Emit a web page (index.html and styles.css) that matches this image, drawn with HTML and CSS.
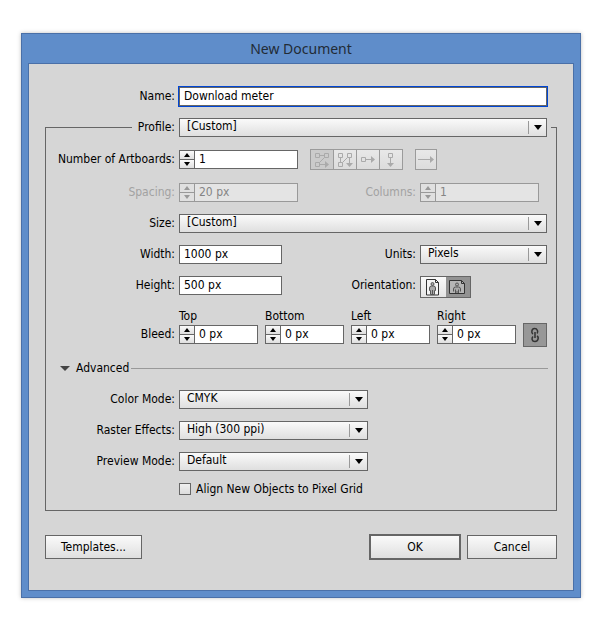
FILE: index.html
```html
<!DOCTYPE html>
<html lang="en">
<head>
    <meta charset="UTF-8">
    <meta name="viewport" content="width=device-width, initial-scale=1.0">
    <title>New Document</title>
    <link rel="stylesheet" href="styles.css">
</head>
<body>
    <main class="window">
        <h1 class="title">New Document</h1>
        <form class="content">
            <div class="row name-row">
                <label for="name">Name:</label>
                <input class="text focused" type="text" id="name" value="Download meter">
            </div>

            <fieldset>
                <legend>
                    <label for="profile">Profile:</label>
                    <span class="select"><select id="profile"><option>[Custom]</option></select></span>
                </legend>

                <div class="row artboards-row">
                    <label for="artboards">Number of Artboards:</label>
                    <div class="artboards">
                        <div class="stepper">
                            <div class="spin"><button type="button" class="up" aria-label="Increase"></button><button type="button" class="down" aria-label="Decrease"></button></div>
                            <input type="text" id="artboards" value="1">
                        </div>
                        <div class="group layout">
                            <button type="button" class="on" aria-label="Grid by row" disabled>
                                <svg width="16" height="16" viewBox="0 0 16 16"><path d="M1.5 1.5h4v4h-4zM10.500 1.500h4v4h-4zM1.500 10.500h4v4h-4zM5.500 3.500h5M10.500 5.500l-5 5M5.500 12.500h6"/><path class="solid" d="M11 9l4 3.500-4 3.500z"/></svg>
                            </button>
                            <button type="button" aria-label="Grid by column" disabled>
                                <svg width="16" height="16" viewBox="0 0 16 16"><path d="M1.5 1.5h4v4h-4zM10.500 1.500h4v4h-4zM1.500 10.500h4v4h-4zM3.500 5.500v5M5.500 10.500l5-5M12.500 5.500v6"/><path class="solid" d="M9 11h7l-3.500 4z"/></svg>
                            </button>
                            <button type="button" aria-label="Arrange by row" disabled>
                                <svg width="16" height="16" viewBox="0 0 16 16"><path d="M1.500 5.500h4v4h-4zM5.500 7.500h6"/><path class="solid" d="M11 4l4 3.500-4 3.500z"/></svg>
                            </button>
                            <button type="button" aria-label="Arrange by column" disabled>
                                <svg width="16" height="16" viewBox="0 0 16 16"><path d="M5.500 1.500h4v4h-4zM7.500 5.500v6"/><path class="solid" d="M4 11h7l-3.500 4z"/></svg>
                            </button>
                        </div>
                        <div class="group direction">
                            <button type="button" aria-label="Left to right layout" disabled>
                                <svg width="18" height="16" viewBox="0 0 18 16"><path d="M1 7.500h13"/><path class="solid" d="M13 4l4 3.500-4 3.500z"/></svg>
                            </button>
                        </div>
                    </div>
                </div>

                <div class="row disabled">
                    <label for="spacing">Spacing:</label>
                    <div class="stepper">
                        <div class="spin"><button type="button" class="up" aria-label="Increase" disabled></button><button type="button" class="down" aria-label="Decrease" disabled></button></div>
                        <input type="text" id="spacing" value="20 px" disabled>
                    </div>
                    <label for="columns">Columns:</label>
                    <div class="stepper">
                        <div class="spin"><button type="button" class="up" aria-label="Increase" disabled></button><button type="button" class="down" aria-label="Decrease" disabled></button></div>
                        <input type="text" id="columns" value="1" disabled>
                    </div>
                </div>

                <div class="row wide">
                    <label for="size">Size:</label>
                    <span class="select"><select id="size"><option>[Custom]</option></select></span>
                </div>

                <div class="row">
                    <label for="width">Width:</label>
                    <input class="text short" type="text" id="width" value="1000 px">
                    <label for="units">Units:</label>
                    <span class="select"><select id="units"><option>Pixels</option></select></span>
                </div>

                <div class="row">
                    <label for="height">Height:</label>
                    <input class="text short" type="text" id="height" value="500 px">
                    <span class="label" id="orientation">Orientation:</span>
                    <div class="group orientation" role="group" aria-labelledby="orientation">
                        <button type="button" aria-label="Portrait">
                            <svg width="14" height="17" viewBox="0 0 14 17"><path class="page" d="M.5.5h9l3 3v12.500H.5z"/><path class="fold" d="M9.500.5v3h3"/><circle class="body" cx="6.500" cy="5" r="1.500"/><path class="body" d="M3.500 11.500V9q0-2 2-2h2q2 0 2 2v2.500H8.500v4h-4v-4zM6.500 11v4.500"/></svg>
                        </button>
                        <button type="button" class="on" aria-label="Landscape">
                            <svg width="17" height="14" viewBox="0 0 17 14"><path class="page" d="M.5.5h12l3 3v10H.5z"/><path class="fold" d="M12.500.5v3h3"/><circle class="body" cx="8" cy="4.500" r="1.500"/><path class="body" d="M4.500 11.500V9q0-2 2-2h3q2 0 2 2v2.500M6.500 13V9.500M9.500 13V9.500M8 11v2"/></svg>
                        </button>
                    </div>
                </div>

                <div class="bleed">
                    <span class="label">Bleed:</span>
                    <div class="side">
                        <label for="top">Top</label>
                        <div class="stepper">
                            <div class="spin"><button type="button" class="up" aria-label="Increase"></button><button type="button" class="down" aria-label="Decrease"></button></div>
                            <input type="text" id="top" value="0 px">
                        </div>
                    </div>
                    <div class="side">
                        <label for="bottom">Bottom</label>
                        <div class="stepper">
                            <div class="spin"><button type="button" class="up" aria-label="Increase"></button><button type="button" class="down" aria-label="Decrease"></button></div>
                            <input type="text" id="bottom" value="0 px">
                        </div>
                    </div>
                    <div class="side">
                        <label for="left">Left</label>
                        <div class="stepper">
                            <div class="spin"><button type="button" class="up" aria-label="Increase"></button><button type="button" class="down" aria-label="Decrease"></button></div>
                            <input type="text" id="left" value="0 px">
                        </div>
                    </div>
                    <div class="side">
                        <label for="right">Right</label>
                        <div class="stepper">
                            <div class="spin"><button type="button" class="up" aria-label="Increase"></button><button type="button" class="down" aria-label="Decrease"></button></div>
                            <input type="text" id="right" value="0 px">
                        </div>
                    </div>
                    <button type="button" class="link" aria-label="Make all settings the same">
                        <svg width="10" height="16" viewBox="0 0 10 16"><path d="M3 7C1 6 1.500 1.500 4.500 1.500S8.500 5 7 6.500M7 9c2 1 1.500 5.500-2 5.500S1.500 11 3 9.500M5 5v6"/></svg>
                    </button>
                </div>

                <details open>
                    <summary>Advanced</summary>
                    <div class="row wide">
                        <label for="color">Color Mode:</label>
                        <span class="select medium"><select id="color"><option>CMYK</option></select></span>
                    </div>
                    <div class="row wide">
                        <label for="raster">Raster Effects:</label>
                        <span class="select medium"><select id="raster"><option>High (300 ppi)</option></select></span>
                    </div>
                    <div class="row wide">
                        <label for="preview">Preview Mode:</label>
                        <span class="select medium"><select id="preview"><option>Default</option></select></span>
                    </div>
                    <div class="check">
                        <input type="checkbox" id="align">
                        <label for="align">Align New Objects to Pixel Grid</label>
                    </div>
                </details>
            </fieldset>

            <div class="actions">
                <button type="button" class="btn templates">Templates...</button>
                <button type="button" class="btn ok">OK</button>
                <button type="button" class="btn cancel">Cancel</button>
            </div>
        </form>
    </main>
</body>
</html>
```
FILE: styles.css
```css
* {
    box-sizing: border-box;
}
body {
    margin: 0;
    padding: 33px 19px 35px 21px;
    background: #fff;
    color: #000;
    font: 12px/19px "DejaVu Sans Condensed", "Noto Sans", sans-serif;
}
input, select, button {
    font: inherit;
    color: inherit;
    margin: 0;
}
.window {
    background: #5f8dca;
    border: 1px solid #4a70a8;
    padding: 0 6px 6px;
    box-shadow: 0 0 4px rgba(0, 0, 0, 0.25);
}
.title {
    margin: 0;
    font: 14px/29px "Noto Sans", sans-serif;
    color: #222b36;
    text-align: center;
}
.content {
    background: #d6d6d6;
    border: 1px solid #4a70a8;
    padding: 23px 16px 30px;
}

/* rows */
.row {
    display: grid;
    grid-template-columns: 129px 1fr auto 127px;
    column-gap: 4px;
    align-items: start;
    margin-top: 12px;
}
.row > label, .label, legend label {
    text-align: right;
    white-space: nowrap;
}
.name-row {
    grid-template-columns: 130px 1fr;
    margin: 0 10px 12px 0;
}
.wide {
    grid-template-columns: 129px 1fr;
}
.artboards-row {
    grid-template-columns: 129px 1fr;
    align-items: center;
    margin-bottom: 13px;
}
.disabled > label {
    color: #a2a2a2;
}
fieldset {
    margin: 0;
    min-width: 0;
    border: 1px solid #666;
    padding: 0 9px 15px 0;
}
legend {
    display: grid;
    grid-template-columns: 43px 1fr;
    column-gap: 4px;
    width: calc(100% - 82px);
    margin-left: 86px;
    padding: 0 4px 0 0;
}

/* fields */
.text {
    width: 100%;
    height: 19px;
    padding: 0 4px;
    border: 1px solid #666;
    background: #fff;
    outline: none;
}
.short {
    width: 103px;
}
.focused {
    box-shadow: 0 0 0 1px #0046d5;
}
.select {
    position: relative;
    display: block;
    height: 19px;
}
.select select {
    appearance: none;
    display: block;
    width: 100%;
    height: 19px;
    padding: 0 24px 2px 7px;
    border: 1px solid #666;
    border-radius: 0;
    background: linear-gradient(#fafafa, #dfdfdf);
    line-height: 15px;
}
.select::before {
    content: "";
    position: absolute;
    top: 3px;
    right: 18px;
    height: 13px;
    border-left: 1px solid #999;
}
.select::after {
    content: "";
    position: absolute;
    top: 7px;
    right: 5px;
    border: 4px solid transparent;
    border-top: 5px solid #000;
    border-bottom: 0;
}
.medium {
    width: 189px;
}
.stepper {
    display: flex;
    width: 119px;
    height: 19px;
    border: 1px solid #666;
    background: #fff;
}
.stepper input {
    flex: 1;
    min-width: 0;
    padding: 0 4px;
    border: 0;
    background: none;
    outline: none;
}
.spin {
    display: flex;
    flex-direction: column;
    width: 15px;
    border-right: 1px solid #666;
}
.spin button {
    display: flex;
    flex: 1;
    align-items: center;
    justify-content: center;
    padding: 0;
    border: 0;
    background: linear-gradient(#fafafa, #dfdfdf);
}
.spin .down {
    border-top: 1px solid #666;
}
.spin button::before {
    content: "";
    border: 3px solid transparent;
}
.spin .up::before {
    border-bottom: 4px solid #000;
    border-top: 0;
}
.spin .down::before {
    border-top: 4px solid #000;
    border-bottom: 0;
}
.disabled .stepper {
    border-color: #999;
    background: #e4e4e4;
    color: #858585;
}
.disabled .spin, .disabled .spin .down {
    border-color: #999;
}
.disabled .spin button {
    background: #e0e0e0;
}
.disabled .up::before {
    border-bottom-color: #999;
}
.disabled .down::before {
    border-top-color: #999;
}

/* icon buttons */
.artboards {
    display: flex;
    align-items: center;
}
.group {
    display: flex;
}
.group button {
    display: flex;
    align-items: center;
    justify-content: center;
    padding: 0;
}
.group svg, .link svg {
    display: block;
    fill: none;
    stroke: currentColor;
}
.layout, .direction {
    height: 21px;
    border: 1px solid #9b9b9b;
    color: #aaa;
}
.layout {
    margin: 0 12px;
}
.layout button, .direction button {
    width: 23px;
    border: 0;
    background: linear-gradient(#e8e8e8, #dcdcdc);
}
.direction button {
    width: 20px;
}
.layout button + button {
    border-left: 1px solid #9b9b9b;
}
.layout .on {
    width: 22px;
    background: #cbcbcb;
}
.group .solid {
    fill: currentColor;
    stroke: none;
}
.orientation {
    width: 51px;
    height: 22px;
    border: 1px solid #666;
    color: #333;
}
.orientation button {
    flex: 1;
    border: 0;
    background: linear-gradient(#fafafa, #e4e4e4);
}
.orientation .on {
    background: #929292;
}
.orientation .page {
    fill: #f4f4f4;
}
.orientation .on .page {
    fill: #b5b5b5;
}
.orientation .body {
    fill: #aaa;
    stroke: #555;
}

/* bleed */
.bleed {
    display: flex;
    align-items: flex-end;
    margin-top: 10px;
}
.bleed .label {
    flex: none;
    width: 129px;
    margin: 0 4px 3px 0;
}
.side {
    flex: 1;
    min-width: 0;
    margin: 0 7px 3px 0;
}
.side label {
    display: block;
    line-height: 17px;
}
.side .stepper {
    width: 100%;
}
.link {
    display: flex;
    flex: none;
    align-items: center;
    justify-content: center;
    width: 24px;
    height: 24px;
    padding: 0;
    border: 1px solid #666;
    background: #979797;
}
.link svg {
    stroke: #333;
    stroke-width: 1.5;
}

/* advanced */
summary {
    display: flex;
    align-items: center;
    margin: 12px 0 12px 14px;
}
summary::before {
    content: "";
    margin-right: 6px;
    border: 5px solid transparent;
    border-top-color: #444;
    border-bottom: 0;
}
summary::after {
    content: "";
    flex: 1;
    margin: 0 -1px 0 2px;
    border-top: 1px solid #999;
}
.check {
    display: flex;
    align-items: center;
    gap: 5px;
    height: 12px;
    margin: 12px 0 0 133px;
}
.check input {
    appearance: none;
    width: 12px;
    height: 12px;
    border: 1px solid #666;
    background: linear-gradient(#f0f0f0, #dcdcdc);
}

/* bottom buttons */
.actions {
    display: flex;
    align-items: center;
    margin-top: 23px;
}
.btn {
    height: 24px;
    padding: 0;
    border: 1px solid #666;
    background: linear-gradient(#fafafa, #dfdfdf);
}
.templates {
    width: 97px;
    margin-right: auto;
}
.ok {
    width: 92px;
    height: 26px;
    margin-right: 6px;
    border-width: 2px;
}
.cancel {
    width: 90px;
}
```
